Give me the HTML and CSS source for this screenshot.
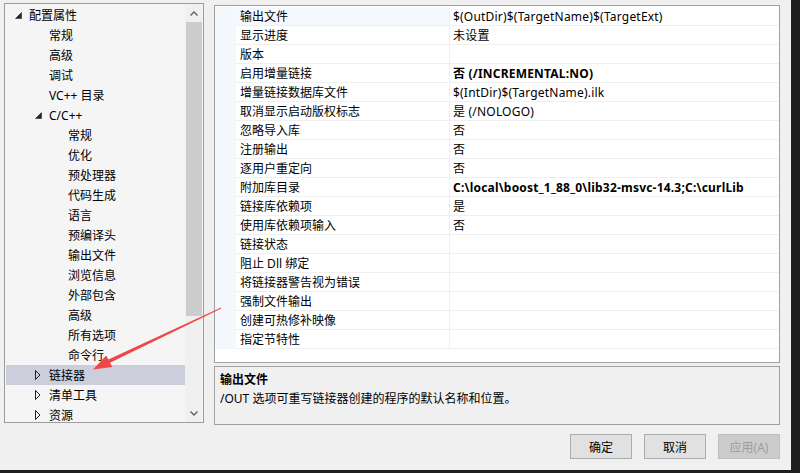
FILE: index.html
```html
<!DOCTYPE html>
<html lang="zh-CN">
<head>
<meta charset="utf-8">
<title>属性页</title>
<link rel="stylesheet" href="styles.css">
</head>
<body>
<div class="dialog">
  <div class="main">
    <div class="tree">
      <div class="tree-rows">
        <div class="node l0"><span class="tw"><svg class="exp" width="7" height="7" viewBox="0 0 7 7"><polygon points="6.5,0.5 6.5,6.5 0.5,6.5"/></svg></span>配置属性</div>
        <div class="node l1"><span class="tw"></span>常规</div>
        <div class="node l1"><span class="tw"></span>高级</div>
        <div class="node l1"><span class="tw"></span>调试</div>
        <div class="node l1"><span class="tw"></span>VC++ 目录</div>
        <div class="node l1"><span class="tw"><svg class="exp" width="7" height="7" viewBox="0 0 7 7"><polygon points="6.5,0.5 6.5,6.5 0.5,6.5"/></svg></span>C/C++</div>
        <div class="node l2"><span class="tw"></span>常规</div>
        <div class="node l2"><span class="tw"></span>优化</div>
        <div class="node l2"><span class="tw"></span>预处理器</div>
        <div class="node l2"><span class="tw"></span>代码生成</div>
        <div class="node l2"><span class="tw"></span>语言</div>
        <div class="node l2"><span class="tw"></span>预编译头</div>
        <div class="node l2"><span class="tw"></span>输出文件</div>
        <div class="node l2"><span class="tw"></span>浏览信息</div>
        <div class="node l2"><span class="tw"></span>外部包含</div>
        <div class="node l2"><span class="tw"></span>高级</div>
        <div class="node l2"><span class="tw"></span>所有选项</div>
        <div class="node l2"><span class="tw"></span>命令行</div>
        <div class="node l1 selected"><span class="tw"><svg class="col" width="6" height="10" viewBox="0 0 6 10"><polygon points="0.5,0.5 5,5 0.5,9.5"/></svg></span>链接器</div>
        <div class="node l1"><span class="tw"><svg class="col" width="6" height="10" viewBox="0 0 6 10"><polygon points="0.5,0.5 5,5 0.5,9.5"/></svg></span>清单工具</div>
        <div class="node l1"><span class="tw"><svg class="col" width="6" height="10" viewBox="0 0 6 10"><polygon points="0.5,0.5 5,5 0.5,9.5"/></svg></span>资源</div>
      </div>
      <div class="vscroll">
        <div class="sbtn"><svg width="8" height="5" viewBox="0 0 8 5"><polyline points="0.5,4.5 4,1 7.5,4.5"/></svg></div>
        <div class="track">
          <div class="thumb"></div>
        </div>
        <div class="sbtn"><svg width="8" height="5" viewBox="0 0 8 5"><polyline points="0.5,0.5 4,4 7.5,0.5"/></svg></div>
      </div>
    </div>

    <div class="right">
      <div class="grid">
        <div class="prow first"><div class="gut"></div><div class="pname">输出文件</div><div class="pval">$(OutDir)$(TargetName)$(TargetExt)</div></div>
        <div class="prow"><div class="gut"></div><div class="pname">显示进度</div><div class="pval">未设置</div></div>
        <div class="prow"><div class="gut"></div><div class="pname">版本</div><div class="pval"></div></div>
        <div class="prow"><div class="gut"></div><div class="pname">启用增量链接</div><div class="pval bold">否 (/INCREMENTAL:NO)</div></div>
        <div class="prow"><div class="gut"></div><div class="pname">增量链接数据库文件</div><div class="pval">$(IntDir)$(TargetName).ilk</div></div>
        <div class="prow"><div class="gut"></div><div class="pname">取消显示启动版权标志</div><div class="pval">是 (/NOLOGO)</div></div>
        <div class="prow"><div class="gut"></div><div class="pname">忽略导入库</div><div class="pval">否</div></div>
        <div class="prow"><div class="gut"></div><div class="pname">注册输出</div><div class="pval">否</div></div>
        <div class="prow"><div class="gut"></div><div class="pname">逐用户重定向</div><div class="pval">否</div></div>
        <div class="prow"><div class="gut"></div><div class="pname">附加库目录</div><div class="pval bold">C:\local\boost_1_88_0\lib32-msvc-14.3;C:\curlLib</div></div>
        <div class="prow"><div class="gut"></div><div class="pname">链接库依赖项</div><div class="pval">是</div></div>
        <div class="prow"><div class="gut"></div><div class="pname">使用库依赖项输入</div><div class="pval">否</div></div>
        <div class="prow"><div class="gut"></div><div class="pname">链接状态</div><div class="pval"></div></div>
        <div class="prow"><div class="gut"></div><div class="pname">阻止 Dll 绑定</div><div class="pval"></div></div>
        <div class="prow"><div class="gut"></div><div class="pname">将链接器警告视为错误</div><div class="pval"></div></div>
        <div class="prow"><div class="gut"></div><div class="pname">强制文件输出</div><div class="pval"></div></div>
        <div class="prow"><div class="gut"></div><div class="pname">创建可热修补映像</div><div class="pval"></div></div>
        <div class="prow"><div class="gut"></div><div class="pname">指定节特性</div><div class="pval"></div></div>
      </div>
      <div class="desc">
        <div class="desc-title">输出文件</div>
        <div class="desc-text">/OUT 选项可重写链接器创建的程序的默认名称和位置。</div>
      </div>
      <div class="buttons">
        <button class="btn">确定</button>
        <button class="btn">取消</button>
        <button class="btn disabled" disabled>应用(A)</button>
      </div>
    </div>
  </div>

  <svg class="annot" width="791" height="470" viewBox="0 0 791 470">
    <polygon class="arrow" points="93,369.5 106.2,355.6 108.4,359.6 221,307.6 221.3,308.4 110,362.8 112.4,367"/>
  </svg>
</div>
</body>
</html>
```

FILE: styles.css
```css
html, body {
  margin: 0;
  padding: 0;
}

body {
  width: 800px;
  height: 473px;
  overflow: hidden;
  background: #1e1e1e;
  font-family: "Noto Sans", "Noto Sans CJK SC", sans-serif;
  font-size: 12px;
  color: #000;
}

.dialog {
  position: relative;
  width: 791px;
  height: 470px;
  box-sizing: border-box;
  padding: 3px 0 0 4px;
  background: #f0f0f0;
}

.main {
  display: flex;
  align-items: flex-start;
  gap: 10px;
}

/* ---------- tree ---------- */
.tree {
  width: 200px;
  height: 420px;
  box-sizing: border-box;
  border: 1px solid #9c9c9c;
  background: #f5f5f5;
  display: flex;
  padding-right: 1px;
  overflow: hidden;
}

.tree-rows {
  flex: 1;
  padding: 1px 0 0 1px;
  overflow: hidden;
}

.node {
  height: 20px;
  line-height: 21px;
  display: flex;
  align-items: center;
  white-space: nowrap;
}

.node.l0 { padding-left: 9px; }
.node.l1 { padding-left: 29px; }
.node.l2 { padding-left: 48px; }

.node.selected {
  background: #cccedb;
}

.tw {
  width: 14px;
  flex: none;
  display: flex;
  align-items: center;
}

.tw .exp polygon {
  fill: #262626;
  stroke: #262626;
  stroke-width: 0.6;
}

.tw .col polygon {
  fill: none;
  stroke: #1e1e1e;
  stroke-width: 1;
}

.vscroll {
  width: 17px;
  flex: none;
  display: flex;
  flex-direction: column;
  background: #f0f0f0;
}

.sbtn {
  height: 18px;
  display: flex;
  align-items: center;
  justify-content: center;
  flex: none;
}

.sbtn svg polyline {
  fill: none;
  stroke: #606060;
  stroke-width: 1.4;
}

.track {
  flex: 1;
  padding-left: 1px;
}

.thumb {
  height: 294px;
  background: #cdcdcd;
}

/* ---------- property grid ---------- */
.right {
  width: 566px;
  margin-top: 2px;
  display: flex;
  flex-direction: column;
}

.grid {
  height: 358px;
  box-sizing: border-box;
  border: 1px solid #a0a0a0;
  background: #fff;
  padding-top: 1px;
}

.prow {
  display: flex;
  height: 19px;
}

.gut {
  width: 21px;
  flex: none;
  background: #f4f7fc;
}

.pname,
.pval {
  box-sizing: border-box;
  height: 19px;
  line-height: 20px;
  border-bottom: 1px solid #f0f0f0;
  white-space: nowrap;
  overflow: hidden;
}

.pname {
  width: 214px;
  flex: none;
  padding-left: 4px;
  border-right: 1px solid #f0f0f0;
}

.prow.first .pname {
  background: #f5f8fc;
}

.pval {
  flex: 1;
  padding-left: 3px;
  letter-spacing: 0.2px;
}

.bold {
  font-weight: bold;
}

/* ---------- description ---------- */
.desc {
  margin-top: 3px;
  height: 59px;
  box-sizing: border-box;
  border: 1px solid #a0a0a0;
  background: #f0f0f0;
  padding: 3px 5px 0;
  line-height: 19px;
}

.desc-title {
  font-weight: bold;
}

/* ---------- buttons ---------- */
.buttons {
  margin-top: 9px;
  display: flex;
  justify-content: flex-end;
  gap: 12px;
}

.btn {
  width: 62px;
  height: 25px;
  box-sizing: border-box;
  border: 1px solid #adadad;
  background: #e1e1e1;
  font-family: "Noto Sans", "Noto Sans CJK SC", sans-serif;
  font-size: 12px;
  color: #000;
  padding: 0;
  margin: 0;
}

.btn.disabled {
  background: #cccccc;
  border-color: #bfbfbf;
  color: #9c9c9c;
}

/* ---------- annotation overlay ---------- */
.annot {
  position: absolute;
  left: 0;
  top: 0;
  pointer-events: none;
}

.arrow {
  fill: #f04848;
}
```
